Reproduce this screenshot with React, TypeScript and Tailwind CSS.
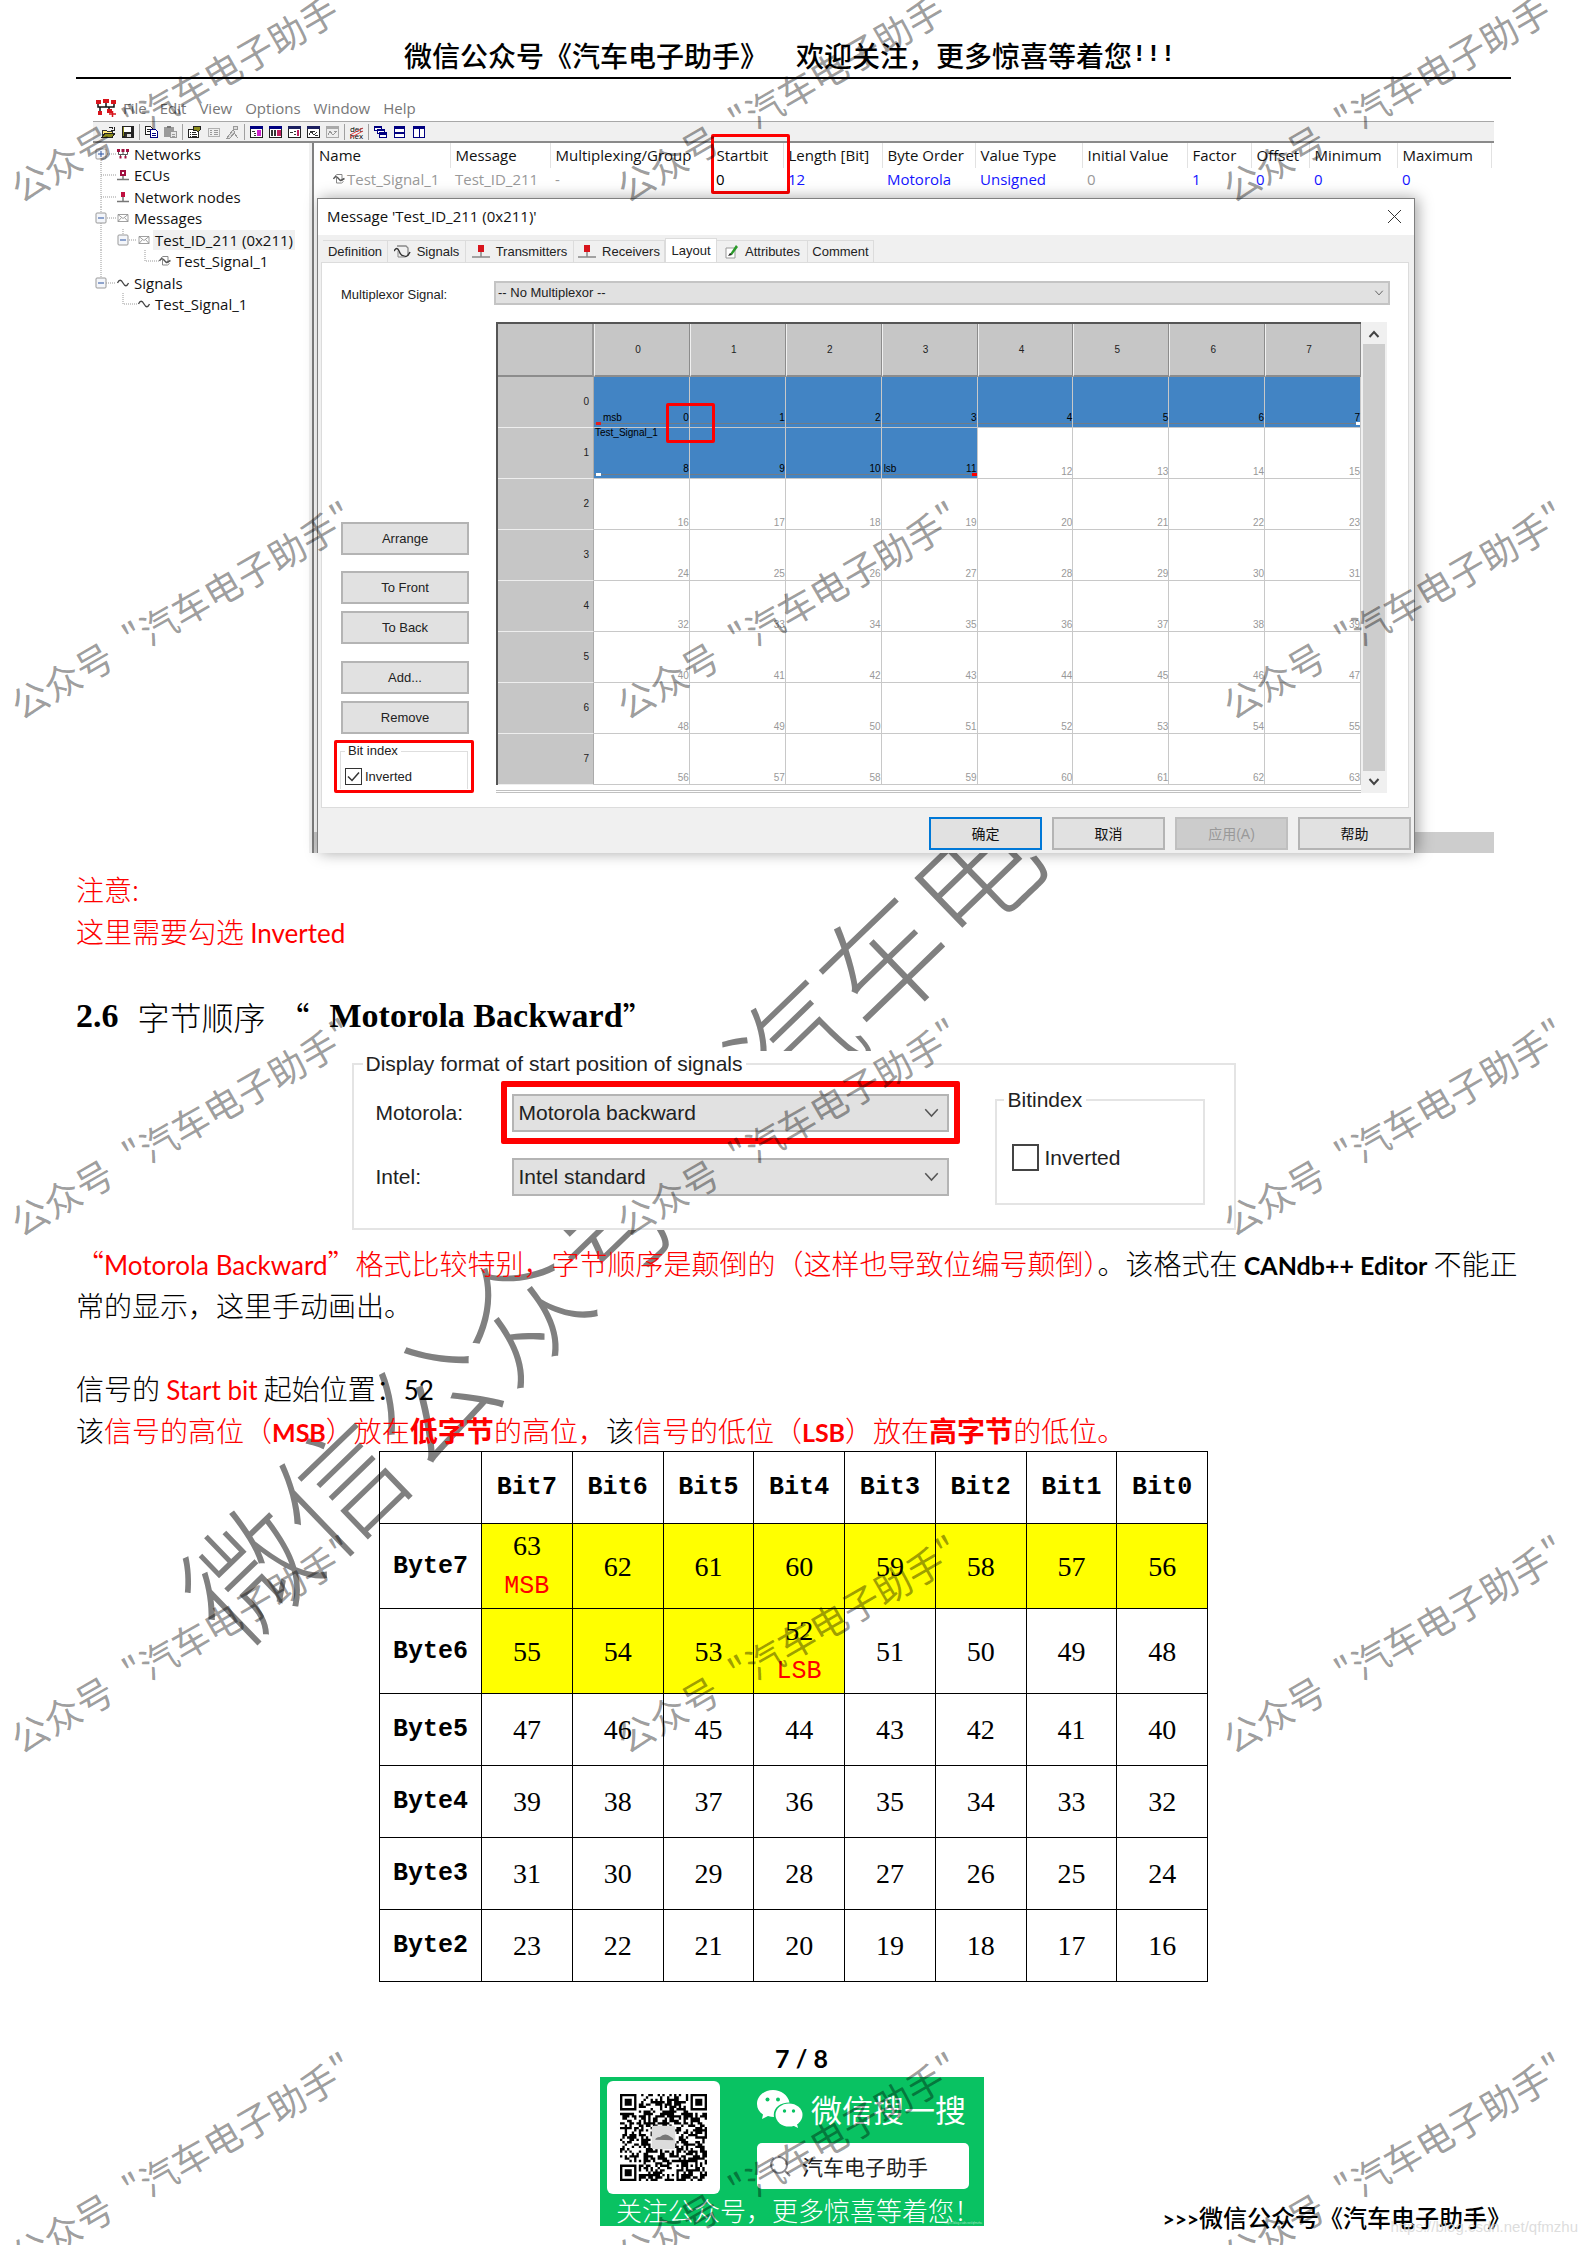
import React from "react";

const UI = "font-['Open_Sans','Noto_Sans_CJK_SC',sans-serif]";
const ARIAL = "font-['Liberation_Sans','Noto_Sans_CJK_SC',sans-serif]";
const CJK = "font-['Noto_Sans_CJK_SC',sans-serif]";

/* ---------- Watermarks ---------- */

function SmallWatermarks() {
  return (
    <div aria-hidden className="pointer-events-none absolute inset-0 z-20 overflow-hidden">
      <div className="-ml-[113px] -mt-[170px] grid w-max auto-rows-[517px] grid-cols-[repeat(3,606px)] place-items-center">
        {Array.from({ length: 15 }, (_, i) => (
          <span key={i} className="-rotate-30 whitespace-nowrap pr-[20px] text-[37px] leading-none text-black/40">
            公众号<span className="ml-[20px]">"</span>汽车电子助手"
          </span>
        ))}
      </div>
    </div>
  );
}

function LargeWatermark() {
  return (
    <div aria-hidden className="pointer-events-none absolute -left-[12px] right-0 top-[981px] flex justify-center">
      <span className="-rotate-44 whitespace-nowrap font-light text-[126px] leading-none text-[#808080]">
        微信公众号《汽车电子助手》
      </span>
    </div>
  );
}

/* ---------- Tool bar ---------- */

function Ico({ children }: { children: React.ReactNode }) {
  return (
    <svg width="15" height="14" viewBox="0 0 15 14" className="block" shapeRendering="crispEdges">
      {children}
    </svg>
  );
}

const folder = (
  <Ico>
    <path d="M1 12V5h4l1 1h5v2" fill="#ffe97a" stroke="#333" />
    <path d="M1 12.5L4 8h10l-3 4.5z" fill="#8a8a1a" stroke="#222" />
    <path d="M8 3q3-2 4 1M13 2v3h-3" fill="none" stroke="#222" />
  </Ico>
);
const save = (
  <Ico>
    <rect x="2" y="1" width="12" height="12" fill="#222" />
    <rect x="4" y="2" width="7" height="5" fill="#fff" />
    <rect x="3" y="2" width="1" height="9" fill="#8a8a1a" />
    <rect x="5" y="9" width="6" height="3" fill="#ddd" />
    <rect x="5" y="9" width="2" height="3" fill="#333" />
  </Ico>
);
const copy = (
  <Ico>
    <path d="M1.5 1.5h5l2 2v6h-7z" fill="#fff" stroke="#222" />
    <path d="M3 4h3M3 6h4" stroke="#222" />
    <path d="M6.5 4.5h5l2 2v6h-7z" fill="#fff" stroke="#000080" />
    <path d="M8 8h4M8 10h4" stroke="#000080" />
  </Ico>
);
const paste = (
  <Ico>
    <path d="M1 2h10v10H1z" fill="#9a9a9a" />
    <rect x="4" y="1" width="4" height="2" fill="#777" />
    <path d="M7.5 6.5h6v6h-6z" fill="#e8e8e8" stroke="#999" />
    <path d="M9 9h3M9 11h3" stroke="#999" />
  </Ico>
);
const props = (
  <Ico>
    <path d="M1.5 4.5h10v8h-10z" fill="#fff" stroke="#222" />
    <path d="M3 7h1M5 7h4M3 9h1M5 9h5M3 11h1M5 11h5" stroke="#222" />
    <path d="M6 1h7l1 3-3 3-2-2-3 1z" fill="#8a8a1a" stroke="#222" />
  </Ico>
);
const list = (
  <Ico>
    <path d="M2.5 3.5h11v8h-11z" fill="#eee" stroke="#b0b0b0" />
    <path d="M4 5.5h2M8 5.5h4M4 7.5h2M8 7.5h4M4 9.5h2M8 9.5h4" stroke="#999" />
  </Ico>
);
const tools = (
  <Ico>
    <path d="M8 1.5h4v3h-4zM2 13l6-8 2 2-5 6zM9 8l4 5" fill="#ddd" stroke="#999" />
  </Ico>
);
function WindowIco({ variant }: { variant: number }) {
  const gray = variant === 4;
  return (
    <Ico>
      <rect x="1.5" y="1.5" width="12" height="11" fill={gray ? "#eee" : "#fff"} stroke={gray ? "#aaa" : "#222"} />
      <rect x="1" y="1" width="13" height="3" fill={gray ? "#aaa" : variant === 0 || variant === 1 ? "#000080" : "#1c2060"} />
      {variant === 0 && <path d="M3 6h3M5 8h2M5 10h2" stroke="#333" />}
      {variant === 0 && <path d="M8 6h4M8 8h4M8 10h4" stroke="#d020d0" strokeWidth="1.5" />}
      {variant === 1 && <path d="M4 5v6M7 5v6" stroke="#333" strokeWidth="1.5" />}
      {variant === 1 && <path d="M10 5v6M12 5v6" stroke="#c02060" strokeWidth="1.5" />}
      {variant === 2 && <path d="M3 7h3M7 6h2M7 9h2" stroke="#333" />}
      {variant === 2 && <path d="M11 5v6" stroke="#c02060" strokeWidth="1.5" />}
      {variant === 3 && <path d="M3 10l2-4 3 4 3-3M4 6h5M9 10h3" stroke="#333" fill="none" />}
      {variant === 4 && <path d="M3 10l2-4 3 4 3-3M9 6h3" stroke="#999" fill="none" />}
    </Ico>
  );
}
const decHex = (
  <span className={`${UI} relative block w-[15px] text-center text-[8px] leading-[7px] text-black`}>
    dec
    <br />
    hex
    <svg className="absolute inset-0" width="15" height="14" viewBox="0 0 15 14">
      <path d="M1 10L14 3M1 13L14 6" stroke="#e02020" strokeWidth="0.8" />
    </svg>
  </span>
);
const cascade = (
  <Ico>
    <path d="M1.5 1.5h7v4h-7zM4.5 4.5h7v4h-7zM6.5 7.5h7v5h-7z" fill="#fff" stroke="#000080" />
    <path d="M1 2h8M4 5h8M6 8.5h8" stroke="#000080" strokeWidth="2" />
  </Ico>
);
const tileH = (
  <Ico>
    <path d="M2.5 1.5h10v11h-10z" fill="#fff" stroke="#000080" />
    <path d="M2 2.5h11M2 7.5h11" stroke="#000080" strokeWidth="2" />
  </Ico>
);
const tileV = (
  <Ico>
    <path d="M2.5 1.5h11v11h-11zM8 2v11" fill="#fff" stroke="#000080" />
    <path d="M2 2.5h12" stroke="#000080" strokeWidth="2" />
  </Ico>
);

const TOOL_GROUPS: [string, React.ReactNode][][] = [
  [["Open", folder], ["Save", save]],
  [["Copy", copy], ["Paste", paste]],
  [["Properties", props], ["List", list], ["Tools", tools]],
  [
    ["Window 1", <WindowIco variant={0} />],
    ["Window 2", <WindowIco variant={1} />],
    ["Window 3", <WindowIco variant={2} />],
    ["Window 4", <WindowIco variant={3} />],
    ["Window 5", <WindowIco variant={4} />],
  ],
  [["Number format", decHex]],
  [["Cascade", cascade], ["Tile horizontally", tileH], ["Tile vertically", tileV]],
];

function MenuBar() {
  return (
    <div className={`${UI} flex h-[26px] items-center gap-[13px] pl-[3px] text-[15px] leading-5 text-[#777]`}>
      <svg width="21" height="18" viewBox="0 0 21 18" className="-mr-[7px]">
        <path d="M0 1h5v4H0zM7 0h6v4H7zM15 1h5v4h-5z" fill="#d8141c" />
        <path d="M2 5v3h16V5M10 4v4M4 8v5M13 8v3" stroke="#111" strokeWidth="1.5" fill="none" />
        <path d="M2 12h4v4H2zM11 10h5v4h-5z" fill="#d8141c" />
        <path d="M13 15h7M16.5 12v6" stroke="#d8141c" strokeWidth="1.5" />
      </svg>
      {["File", "Edit", "View", "Options", "Window", "Help"].map((m) => (
        <button key={m}>{m}</button>
      ))}
    </div>
  );
}

function ToolBar() {
  return (
    <div className="flex h-[22px] items-center border-b-2 border-t border-b-[#8a8a8a] border-t-[#a8a8a8] bg-[#f0f0f0] pl-[6px]">
      {TOOL_GROUPS.map((g, i) => (
        <div key={i} className="flex items-center">
          {i > 0 && <span className="mx-[2px] h-4 w-px bg-[#a0a0a0]" />}
          {g.map(([label, icon]) => (
            <button key={label} aria-label={label} className="flex w-[19px] justify-center">
              {icon}
            </button>
          ))}
        </div>
      ))}
    </div>
  );
}

/* ---------- Tree ---------- */

type IconKind = "net" | "ecu" | "node" | "msg" | "sig" | "wave";

function TreeIcon({ kind }: { kind: IconKind }) {
  return (
    <svg width="12" height="12" viewBox="0 0 12 12" className="block shrink-0">
      {kind === "net" && (
        <g>
          <path d="M0 1h3v3H0zM4.5 1h3v3h-3zM9 1h3v3H9z" fill="#a01040" />
          <path d="M1.5 4v2.5h9V4M6 4v3M3.5 6.5V10M8.5 6.5V10" stroke="#555" fill="none" />
          <path d="M2.5 8h2v2.5h-2zM7.5 8h2v2.5h-2z" fill="#a01040" />
        </g>
      )}
      {kind === "ecu" && (
        <g>
          <path d="M3 1h6v6H3z" fill="#a01040" />
          <path d="M5 3h2v2H5z" fill="#fff" />
          <path d="M6 7v3M0 10.5h12" stroke="#777" strokeWidth="1.5" />
        </g>
      )}
      {kind === "node" && (
        <g>
          <path d="M4 1h4v5H4z" fill="#c01040" />
          <path d="M6 6v4M0 10.5h12" stroke="#777" strokeWidth="1.5" />
        </g>
      )}
      {kind === "msg" && (
        <path d="M1 2.5h10v7H1zM1 2.5l5 4 5-4M1 9.5l3.5-4M11 9.5l-3.5-4" fill="#fff" stroke="#888" strokeWidth="0.8" />
      )}
      {kind === "sig" && (
        <g fill="none" stroke="#555">
          <path d="M2 3l2-1.500h5V8" stroke="#888" />
          <path d="M3.500 5v5h5l2-1.500" stroke="#888" />
          <path d="M0.5 6q2-4 4.500-1t3 2.500 3.500-2" strokeWidth="1.4" />
        </g>
      )}
      {kind === "wave" && (
        <path d="M0.5 6Q3 0.5 6 6T11.5 6" fill="none" stroke="#444" strokeWidth="1.3" />
      )}
    </svg>
  );
}

function Box({ x, plus }: { x: number; plus?: boolean }) {
  return (
    <g>
      <rect x={x - 5} y="6" width="10" height="10" rx="1" fill="#f4f6fa" stroke="#999" />
      <path d={`M${x - 3} 11h6`} stroke="#2a52a0" />
      {plus && <path d={`M${x} 8v6`} stroke="#2a52a0" />}
    </g>
  );
}

const TREE: {
  text: string;
  kind: IconKind;
  gutter: string;
  lines: string;
  box?: number;
  plus?: boolean;
  selected?: boolean;
}[] = [
  { text: "Networks", kind: "net", gutter: "w-[24px]", lines: "M8 11V22M8 11H23", box: 8, plus: true },
  { text: "ECUs", kind: "ecu", gutter: "w-[24px]", lines: "M8 0V22M8 11H23" },
  { text: "Network nodes", kind: "node", gutter: "w-[24px]", lines: "M8 0V22M8 11H23" },
  { text: "Messages", kind: "msg", gutter: "w-[24px]", lines: "M8 0V22M8 11H23", box: 8 },
  { text: "Test_ID_211 (0x211)", kind: "msg", gutter: "w-[45px]", lines: "M8 0V22M30 0V11M30 11H44", box: 30, selected: true },
  { text: "Test_Signal_1", kind: "sig", gutter: "w-[66px]", lines: "M8 0V22M52 0V11H66" },
  { text: "Signals", kind: "wave", gutter: "w-[24px]", lines: "M8 0V11H23", box: 8 },
  { text: "Test_Signal_1", kind: "wave", gutter: "w-[45px]", lines: "M30 0V11H44" },
];

function Tree() {
  return (
    <ul className={`${UI} grid h-[172px] w-[216px] shrink-0 grid-rows-8 text-[15px] leading-5 text-[#111]`}>
      {TREE.map((r, i) => (
        <li key={i} className="flex items-center">
          <svg height="22" className={`${r.gutter} block shrink-0 overflow-visible`}>
            <path d={r.lines} fill="none" stroke="#999" strokeDasharray="1 1" />
            {r.box && <Box x={r.box} plus={r.plus} />}
          </svg>
          <TreeIcon kind={r.kind} />
          <span className={`ml-[3px] px-[2px] whitespace-nowrap ${r.selected ? "bg-[#f0f0f0]" : ""}`}>{r.text}</span>
        </li>
      ))}
    </ul>
  );
}

/* ---------- Signal list ---------- */

const COLS: [string, string, string, string][] = [
  ["Name", "Test_Signal_1", "w-[136px]", "text-[#999]"],
  ["Message", "Test_ID_211", "w-[100px]", "text-[#999]"],
  ["Multiplexing/Group", "-", "w-[161px]", "text-[#999]"],
  ["Startbit", "0", "w-[72px]", "text-black"],
  ["Length [Bit]", "12", "w-[99px]", "text-[#1414ff]"],
  ["Byte Order", "Motorola", "w-[93px]", "text-[#1414ff]"],
  ["Value Type", "Unsigned", "w-[107px]", "text-[#1414ff]"],
  ["Initial Value", "0", "w-[105px]", "text-[#999]"],
  ["Factor", "1", "w-[64px]", "text-[#1414ff]"],
  ["Offset", "0", "w-[58px]", "text-[#1414ff]"],
  ["Minimum", "0", "w-[88px]", "text-[#1414ff]"],
  ["Maximum", "0", "w-[94px]", "text-[#1414ff]"],
];

function SignalList() {
  return (
    <div className="relative">
      <table className={`${UI} table-fixed text-left text-[15px] leading-5`}>
        <thead>
          <tr className="h-[25px]">
            {COLS.map(([h, , w]) => (
              <th key={h} className={`${w} whitespace-nowrap border-r border-[#e2e2e2] p-0 pb-[2px] pl-[5px] font-normal text-[#111]`}>
                {h}
              </th>
            ))}
          </tr>
        </thead>
        <tbody>
          <tr className="h-[24px]">
            {COLS.map(([h, v, , c], i) => (
              <td key={h} className={`${c} whitespace-nowrap p-0 pb-[2px] pl-[5px]`}>
                {i === 0 ? (
                  <span className="flex items-center gap-[2px] pl-[14px]">
                    <TreeIcon kind="sig" />
                    {v}
                  </span>
                ) : (
                  v
                )}
              </td>
            ))}
          </tr>
        </tbody>
      </table>
      <div className="absolute -top-[9px] left-[397px] h-[60px] w-[79px] rounded-[2px] border-3 border-[#fe0000]" />
    </div>
  );
}

/* ---------- Message dialog ---------- */

function NodeIcon() {
  return (
    <svg width="18" height="14" viewBox="0 0 18 14" className="block shrink-0">
      <path d="M6 0h6v7H6z" fill="#d8141c" />
      <path d="M9 7v5M0 12h18" stroke="#888" strokeWidth="1.5" />
    </svg>
  );
}

function Tabs() {
  const tabs: [string, string, React.ReactNode][] = [
    ["Definition", "w-[65px]", null],
    [
      "Signals",
      "w-[78px]",
      <svg width="17" height="14" viewBox="0 0 17 14" className="block shrink-0" fill="none">
        <path d="M3 1h9l2 2v8" stroke="#888" strokeWidth="1.3" />
        <path d="M0 6q3-5 5 0t5 5q3 2 6-4" stroke="#333" strokeWidth="1.5" />
        <path d="M4 6v6h7" stroke="#888" />
      </svg>,
    ],
    ["Transmitters", "w-[108px]", <NodeIcon />],
    ["Receivers", "w-[91px]", <NodeIcon />],
    ["Layout", "w-[52px]", null],
    [
      "Attributes",
      "w-[91px]",
      <svg width="15" height="15" viewBox="0 0 15 15" className="block shrink-0">
        <path d="M2 4h9v10H2z" fill="#fff" stroke="#999" />
        <path d="M6 10l6-9 2 2-6 8z" fill="#2a9a2a" />
        <path d="M4 12l2-3 2 2z" fill="#222" />
      </svg>,
    ],
    ["Comment", "w-[66px]", null],
  ];
  return (
    <div role="tablist" className="flex h-[27px] items-end bg-[#f0f0f0] pl-[5px] text-[13px] leading-4 text-[#222]">
      {tabs.map(([t, w, icon]) => {
        const on = t === "Layout";
        return (
          <button
            key={t}
            role="tab"
            aria-selected={on}
            className={`${w} flex shrink-0 items-center justify-center gap-[6px] border border-b-0 border-[#dcdcdc] whitespace-nowrap ${
              on ? "h-[24px] bg-white" : "h-[22px] border-l-0 bg-[#f0f0f0]"
            }`}
          >
            {icon}
            {t}
          </button>
        );
      })}
    </div>
  );
}

function Chevron({ className }: { className: string }) {
  return (
    <svg viewBox="0 0 12 8" className={className} fill="none" stroke="#555">
      <path d="M1 1l5 5.5L11 1" strokeWidth="1.2" />
    </svg>
  );
}

function BitGrid() {
  const n = [0, 1, 2, 3, 4, 5, 6, 7];
  return (
    <table className="w-full table-fixed border-separate border-spacing-0 border-l-2 border-t-2 border-[#555] text-[10px] leading-[12px]">
      <thead>
        <tr className="h-[53px]">
          <th className="w-[96px] border-b-2 border-r-2 border-b-[#8c8c8c] border-r-[#999] bg-[#c6c6c6] p-0" />
          {n.map((c) => (
            <th
              key={c}
              className="border-b-2 border-l border-r border-b-[#8c8c8c] border-l-[#f0f0f0] border-r-[#8c8c8c] bg-[#c6c6c6] p-0 pr-2 font-normal text-[#222]"
            >
              {c}
            </th>
          ))}
        </tr>
      </thead>
      <tbody>
        {n.map((r) => (
          <tr key={r} className="h-[51px]">
            <th className="border-b border-r border-b-[#eee] border-r-[#aaa] bg-[#c6c6c6] p-0 pr-1 text-right font-normal text-[#222]">
              {r}
            </th>
            {n.map((c) => {
              const v = r * 8 + c;
              const blue = v < 12;
              return (
                <td
                  key={c}
                  className={`relative border-b border-r border-[#c8c8c8] p-0 text-right align-bottom ${
                    blue ? "bg-[#4284c4] text-black" : "text-[#999]"
                  }`}
                >
                  {blue && <div className="absolute inset-x-0 bottom-[3px] h-px bg-[#707c88]" />}
                  {(v === 0 || v === 8) && (
                    <div className={`absolute bottom-[2px] left-[2px] h-[3px] w-[5px] ${v ? "bg-white" : "bg-[#e02020]"}`} />
                  )}
                  {v === 7 && <div className="absolute bottom-[2px] right-0 h-[3px] w-[4px] bg-white" />}
                  {v === 11 && <div className="absolute bottom-[2px] right-0 h-[3px] w-[5px] bg-[#f00]" />}
                  {v === 0 && <span className="absolute bottom-[3px] left-[9px]">msb</span>}
                  {v === 8 && <span className="absolute -top-px left-px">Test_Signal_1</span>}
                  {v === 11 && <span className="absolute bottom-[3px] left-[2px]">lsb</span>}
                  {v === 0 && (
                    <div className="absolute -bottom-[16px] -right-[26px] z-10 h-[40px] w-[49px] rounded-[2px] border-3 border-[#fe0000]" />
                  )}
                  <span className={`block ${blue ? "pb-[3px]" : ""}`}>{v}</span>
                </td>
              );
            })}
          </tr>
        ))}
      </tbody>
    </table>
  );
}

const SIDE = "h-[33px] w-[128px] border-2 border-[#b4b4b4] bg-[#e1e1e1] text-[13px] leading-4 text-[#222]";
const ACTION = "h-[33px] w-[113px] border-2 text-[14px] leading-5";

function Check({ id, label, checked, big }: { id: string; label: string; checked?: boolean; big?: boolean }) {
  return (
    <div className="flex items-center">
      <span className="relative block">
        <input
          id={id}
          type="checkbox"
          defaultChecked={checked}
          className={`peer block appearance-none bg-white ${
            big ? "size-[27px] border-2 border-[#444]" : "size-[17px] border border-[#333]"
          }`}
        />
        <svg
          viewBox="0 0 17 17"
          className="pointer-events-none absolute inset-0 hidden size-full peer-checked:block"
          fill="none"
          stroke="#333"
          strokeWidth="1.5"
        >
          <path d="M3 8.5l4 4 7-8" />
        </svg>
      </span>
      <label htmlFor={id} className={big ? "pl-[6px]" : "pl-[3px]"}>
        {label}
      </label>
    </div>
  );
}

function MessageDialog() {
  return (
    <div
      role="dialog"
      className={`${ARIAL} relative ml-[3px] mr-[79px] border border-b-0 border-[#808080] bg-[#f0f0f0] shadow-[3px_0_14px_rgba(0,0,0,0.35)]`}
    >
      <div className={`${UI} flex h-[36px] items-center justify-between bg-white pb-[2px] pl-[9px] pr-[13px] text-[15px] leading-5 text-[#111]`}>
        <h2>Message 'Test_ID_211 (0x211)'</h2>
        <button aria-label="Close">
          <svg width="13" height="13" viewBox="0 0 13 13" stroke="#333">
            <path d="M0 0l13 13M13 0L0 13" />
          </svg>
        </button>
      </div>
      <Tabs />
      <div className="ml-[3px] mr-[5px] h-[546px] border border-[#dcdcdc] bg-white pl-[19px] pr-[18px] pt-[18px] text-[13px] leading-4 text-[#222]">
        <div className="flex h-[24px] items-center">
          <label htmlFor="mux" className="w-[153px] shrink-0 pt-1 text-[13px]">
            Multiplexor Signal:
          </label>
          <div className="relative flex-1">
            <select id="mux" className="h-[24px] w-full appearance-none border-2 border-[#c4c4c4] bg-[#e1e1e1] pl-[2px] text-[13px]">
              <option>-- No Multiplexor --</option>
            </select>
            <Chevron className="pointer-events-none absolute right-[6px] top-[9px] h-[6px] w-[10px]" />
          </div>
        </div>
        <div className="mt-[17px] flex">
          <div className="w-[155px] shrink-0 pt-[200px]">
            <div className="flex flex-col">
              <button className={SIDE}>Arrange</button>
              <button className={`${SIDE} mt-[16px]`}>To Front</button>
              <button className={`${SIDE} mt-[7px]`}>To Back</button>
              <button className={`${SIDE} mt-[17px]`}>Add...</button>
              <button className={`${SIDE} mt-[7px]`}>Remove</button>
            </div>
            <div className="-ml-[7px] mt-[6px] h-[53px] w-[140px] rounded-[2px] border-3 border-[#fe0000] px-[3px]">
              <fieldset className="h-[46px] border border-b-0 border-[#dedede] px-[4px] text-[13px]">
                <legend className="px-[3px]">Bit index</legend>
                <div className="pt-[9px]">
                  <Check id="inv1" label="Inverted" checked />
                </div>
              </fieldset>
            </div>
          </div>
          <div className="mr-[3px] flex min-w-0 flex-1">
            <div className="min-w-0 flex-1 border-b-3 border-double border-[#c0c0c0]">
              <BitGrid />
            </div>
            <div className="flex w-[26px] flex-col items-center bg-[#f0f0f0]">
              <svg width="12" height="22" viewBox="0 0 12 22" fill="none" stroke="#444" strokeWidth="2">
                <path d="M1.5 15L6 10l4.5 5" />
              </svg>
              <div className="w-[22px] flex-1 bg-[#cdcdcd]" />
              <svg width="12" height="22" viewBox="0 0 12 22" fill="none" stroke="#444" strokeWidth="2">
                <path d="M1.5 8L6 13l4.5-5" />
              </svg>
            </div>
          </div>
        </div>
      </div>
      <div className="flex justify-end gap-[10px] pb-[3px] pr-[3px] pt-[9px]">
        <button className={`${ACTION} border-[#0078d7] bg-[#e1e1e1] text-[#111]`}>确定</button>
        <button className={`${ACTION} border-[#b4b4b4] bg-[#e1e1e1] text-[#111]`}>取消</button>
        <button disabled className={`${ACTION} border-[#bfbfbf] bg-[#cccccc] text-[#999]`}>
          应用(A)
        </button>
        <button className={`${ACTION} border-[#b4b4b4] bg-[#e1e1e1] text-[#111]`}>帮助</button>
      </div>
    </div>
  );
}

function EditorWindow() {
  return (
    <section className="mx-[17px] mt-[16px] bg-white">
      <MenuBar />
      <ToolBar />
      <div className="flex">
        <Tree />
        <div className="w-[3px] shrink-0 bg-[#f0f0f0]" />
        <div className="relative min-w-0 flex-1 border-l-2 border-[#808080]">
          <SignalList />
          <div className="absolute inset-x-0 bottom-0 h-[21px] bg-[#cdcdcd]" />
          <div className="h-[6px]" />
          <MessageDialog />
        </div>
      </div>
    </section>
  );
}

/* ---------- Display format group ---------- */

function FormatSelect({ id, value }: { id: string; value: string }) {
  return (
    <div className="relative">
      <select id={id} className="h-[38px] w-full appearance-none border-2 border-[#b4b4b4] bg-[#e1e1e1] pl-[5px] text-[21px] leading-7">
        <option>{value}</option>
      </select>
      <Chevron className="pointer-events-none absolute right-[10px] top-[14px] h-[10px] w-[15px]" />
    </div>
  );
}

function FormatGroup() {
  return (
    <section className={`${ARIAL} mx-auto mt-[11px] w-[884px] bg-white text-[21px] leading-[26px] text-[#222]`}>
      <fieldset className="flex h-[179px] border-2 border-[#e4e4e4] px-[9px]">
        <legend className="px-[3px]">Display format of start position of signals</legend>
        <div className="w-[598px] shrink-0 pl-[13px] pt-[4px]">
          <div className="flex h-[63px] items-center">
            <label htmlFor="moto" className="w-[125px] shrink-0">
              Motorola:
            </label>
            <div className="h-[63px] w-[459px] rounded-[2px] border-6 border-[#fe0000] px-[5px] py-[7px]">
              <FormatSelect id="moto" value="Motorola backward" />
            </div>
          </div>
          <div className="flex items-center pt-[14px]">
            <label htmlFor="intel" className="w-[136px] shrink-0">
              Intel:
            </label>
            <div className="w-[437px]">
              <FormatSelect id="intel" value="Intel standard" />
            </div>
          </div>
        </div>
        <fieldset className="ml-[34px] mt-[10px] h-[118px] w-[210px] border-2 border-[#e4e4e4] px-[7px]">
          <legend className="px-[4px]">Bitindex</legend>
          <div className="pl-[8px] pt-[31px]">
            <Check id="inv2" label="Inverted" big />
          </div>
        </fieldset>
      </fieldset>
    </section>
  );
}

/* ---------- Document text and table ---------- */

function En({ children, bold }: { children: React.ReactNode; bold?: boolean }) {
  return (
    <span className={`font-['Lato',sans-serif] leading-none ${bold ? "text-[25px] font-bold" : "text-[26px] font-normal"}`}>
      {children}
    </span>
  );
}

function Red({ children }: { children: React.ReactNode }) {
  return <span className="text-[#fe0000]">{children}</span>;
}

function BitTable() {
  const rows = [7, 6, 5, 4, 3, 2];
  const bits = [7, 6, 5, 4, 3, 2, 1, 0];
  const mono = "font-['Liberation_Mono',monospace] text-[25px]";
  return (
    <table className="mx-auto w-[829px] table-fixed border-collapse text-center font-['Liberation_Serif',serif] text-[28px] leading-[41px] text-black">
      <thead>
        <tr className="h-[72px]">
          <th className="w-[102px] border border-black" />
          {bits.map((b) => (
            <th key={b} className={`${mono} border border-black p-0 font-bold`}>
              Bit{b}
            </th>
          ))}
        </tr>
      </thead>
      <tbody>
        {rows.map((r) => (
          <tr key={r} className={r > 5 ? "h-[85px]" : "h-[72px]"}>
            <th className={`${mono} border border-black p-0 font-bold`}>Byte{r}</th>
            {bits.map((b) => {
              const v = r * 8 + b;
              return (
                <td key={b} className={`border border-black p-0 ${v >= 52 ? "bg-[#ffff00]" : ""}`}>
                  {v}
                  {(v === 63 || v === 52) && (
                    <div className={`${mono} text-[#fe0000]`}>{v === 63 ? "MSB" : "LSB"}</div>
                  )}
                </td>
              );
            })}
          </tr>
        ))}
      </tbody>
    </table>
  );
}

/* ---------- Footer ---------- */

function qrPath() {
  const N = 37;
  let seed = 20210;
  const rnd = () => {
    seed = (seed * 1103515245 + 12345) % 2147483648;
    return seed / 2147483648;
  };
  const finder = (x: number, y: number) => {
    const d = Math.max(Math.abs(x - 3), Math.abs(y - 3));
    return d === 3 || d < 2;
  };
  let d = "";
  for (let y = 0; y < N; y++) {
    for (let x = 0; x < N; x++) {
      let on = rnd() > 0.5;
      const left = x < 8;
      const right = x > N - 9;
      const top = y < 8;
      const bottom = y > N - 9;
      if (left && top) on = x < 7 && y < 7 && finder(x, y);
      else if (right && top) on = x > N - 8 && y < 7 && finder(x - N + 7, y);
      else if (left && bottom) on = x < 7 && y > N - 8 && finder(x, y - N + 7);
      else if (Math.abs(x - 30) < 3 && Math.abs(y - 30) < 3)
        on = Math.max(Math.abs(x - 30), Math.abs(y - 30)) !== 1;
      if (on) d += `M${x} ${y}h1v1h-1z`;
    }
  }
  return d;
}
const QR = qrPath();

function Banner() {
  return (
    <div className="relative h-[149px] w-[384px] bg-[#09c262] px-[7px] pt-[4px] text-white">
      <div className="flex">
        <div className="flex size-[113px] shrink-0 items-center justify-center rounded-[6px] bg-white">
          <svg width="87" height="87" viewBox="0 0 37 37">
            <path d={QR} fill="#000" />
            <rect x="13.5" y="13.5" width="10" height="10" rx="1" fill="#dcdcdc" />
            <path d="M15 19.5q0-1 2-1.2 1.5-1.6 3.500-.8l1.5 1q.8.3.8 1.2z" fill="#777" />
          </svg>
        </div>
        <div className="ml-[37px] flex-1 pt-[5px]">
          <div className="flex h-[46px] items-center">
            <svg width="46" height="38" viewBox="0 0 46 38" className="shrink-0">
              <path d="M16 0C7 0 0 6 0 14c0 4.500 2.300 8 6 10.500L5 29l6-3c2 .6 4 1 6 1-1.500-8 5-14.500 15.500-14.500C31 5 24 0 16 0z" fill="#fff" />
              <ellipse cx="32" cy="25" rx="13.5" ry="11.5" fill="#fff" />
              <path d="M35 35l6 3-1.500-6z" fill="#fff" />
              <circle cx="10.5" cy="9.5" r="2" fill="#09c262" />
              <circle cx="21" cy="9.5" r="2" fill="#09c262" />
              <circle cx="27.5" cy="21" r="1.7" fill="#09c262" />
              <circle cx="36.5" cy="21" r="1.7" fill="#09c262" />
            </svg>
            <span className="ml-[8px] whitespace-nowrap text-[31px] leading-10">微信搜一搜</span>
          </div>
          <div className="mt-[11px] flex h-[46px] w-[212px] items-center rounded-[5px] bg-white text-[#222]">
            <svg width="24" height="24" viewBox="0 0 24 24" className="ml-[13px] mr-[8px] shrink-0" fill="none" stroke="#8a8a90" strokeWidth="2">
              <circle cx="9" cy="11" r="8" />
              <path d="M15 17l5 5" />
            </svg>
            <span className="text-[21px] leading-7">汽车电子助手</span>
          </div>
        </div>
      </div>
      <p className="ml-[9px] whitespace-nowrap text-[26px] font-light leading-[32px]">关注公众号，更多惊喜等着您！</p>
      <span className={`${ARIAL} absolute bottom-px right-[2px] text-[3px] leading-[4px] text-white/60`}>
        https://blog.csdn.net/qfmzhu
      </span>
    </div>
  );
}

export default function App() {
  return (
    <div className={`${CJK} relative isolate min-h-screen overflow-hidden bg-white text-black`} lang="zh-CN">
      <LargeWatermark />
      <main className="relative z-10 px-[76px]">
        <header className="flex h-[79px] justify-center border-b-2 border-black pr-[8px] pt-[35px] text-[28px] font-medium leading-[40px] whitespace-nowrap">
          <span>微信公众号《汽车电子助手》</span>
          <span className="ml-[28px]">欢迎关注，更多惊喜等着您</span>
          <span className="font-['Liberation_Mono',monospace] text-[24px] font-bold">!!!</span>
        </header>

        <EditorWindow />

        <p className="mt-[15px] text-[28px] font-light leading-[42px] text-[#fe0000]">
          注意:
          <br />
          这里需要勾选 <En>Inverted</En>
        </p>

        <h1 className="mt-[40px] flex h-[48px] items-center whitespace-pre text-[32px] leading-[48px]">
          <span className="font-['Liberation_Serif',serif] text-[34px] font-bold">2.6</span>
          <span className="ml-[19px] font-light">字节顺序</span>
          <span className="ml-[12px]">“</span>
          <span className="ml-[20px] font-['Liberation_Serif',serif] text-[34px] font-bold">Motorola Backward</span>
          <span>”</span>
        </h1>

        <FormatGroup />

        <p className="-mr-[8px] mt-[12px] text-[28px] font-light leading-[42px]">
          <Red>
            “<En>Motorola Backward</En>”格式比较特别，字节顺序是颠倒的（这样也导致位编号颠倒
            <span className="[font-feature-settings:'halt']">）</span>
          </Red>
          。该格式在 <En bold>CANdb++ Editor</En> 不能正常的显示，这里手动画出。
        </p>
        <p className="mt-[41px] text-[28px] font-light leading-[42px]">
          信号的 <Red><En>Start bit</En></Red> 起始位置：<En>52</En>
          <br />
          该
          <Red>
            信号的高位（<En bold>MSB</En>）放在<b className="font-bold">低字节</b>的高位，
          </Red>
          该
          <Red>
            信号的低位（<En bold>LSB</En>）放在<b className="font-bold">高字节</b>的低位。
          </Red>
        </p>

        <BitTable />

        <footer className="mt-[63px]">
          <p className="pl-[16px] text-center leading-[32px]">
            <En bold>7 / 8</En>
          </p>
          <div className="grid h-[168px] grid-cols-[1fr_384px_527px]">
            <span />
            <Banner />
            <p className="self-end justify-self-end whitespace-nowrap pb-[12px] text-[24px] font-medium leading-[32px]">
              <span className="font-['Lato',sans-serif] text-[21px] font-bold leading-none">&gt;&gt;&gt;</span>
              微信公众号《汽车电子助手》
            </p>
          </div>
        </footer>
      </main>
      <SmallWatermarks />
      <span className="absolute bottom-[6px] right-[9px] z-30 font-['Liberation_Sans',sans-serif] text-[15px] leading-6 text-[#d4d4d4]/80">
        https://blog.csdn.net/qfmzhu
      </span>
    </div>
  );
}
